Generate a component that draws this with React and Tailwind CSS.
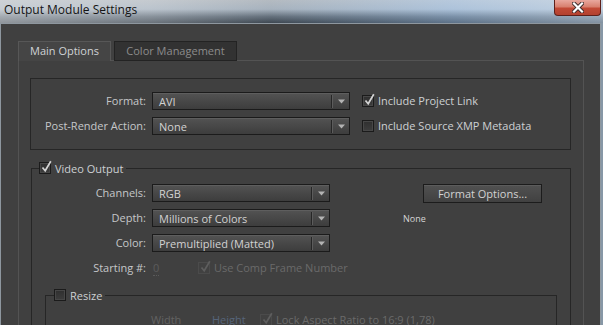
import React from 'react';

function CheckBox({ checked = false, disabled = false }) {
  return (
    <span
      className={`relative block h-[12px] w-[12px] shrink-0 border ${
        disabled
          ? 'border-[#4b4b4b] bg-[#414141]'
          : 'border-[#1b1b1b] bg-linear-to-b from-[#2f2f2f] to-[#3d3d3d] shadow-[inset_0_0_0_1px_#474747]'
      }`}
    >
      {checked && (
        <svg className="absolute left-[1px] top-[-3px]" width="11" height="13" viewBox="0 0 11 13">
          <path
            d="M1.5 7.5 L4.2 10.8 L9.8 1.2"
            fill="none"
            stroke={disabled ? '#5e5e5e' : '#d4d4d4'}
            strokeWidth="1.7"
          />
        </svg>
      )}
    </span>
  );
}

function Select({ value, width }) {
  return (
    <div
      className={`flex h-[18px] ${width} shrink-0 items-center border border-[#1b1b1b] bg-linear-to-b from-[#535353] to-[#3d3d3d] shadow-[inset_0_1px_0_#5e5e5e]`}
    >
      <span className="flex-1 pl-[6px] leading-none text-[#d2d2d2]">{value}</span>
      <span className="h-[13px] w-[2px] border-l border-r border-l-[#262626] border-r-[#5c5c5c]" />
      <span className="flex w-[16px] justify-center">
        <svg width="7" height="5" viewBox="0 0 7 5">
          <path d="M0 0.5H7L3.5 4.5Z" fill="#b3b3b3" />
        </svg>
      </span>
    </div>
  );
}

function GroupHeader({ label, checked, lead }) {
  return (
    <div className="flex h-[12px]">
      <div className={`${lead} mt-[6px] border-l border-t border-[#262626]`} />
      <CheckBox checked={checked} />
      <span className="ml-[4px] self-center leading-none text-[#cdd0d3]">{label}</span>
      <div className="ml-[3px] mt-[6px] flex-1 border-r border-t border-[#262626]" />
    </div>
  );
}

function TitleBar() {
  return (
    <div className="relative flex h-[23px] shrink-0 bg-[linear-gradient(180deg,#c9cfd5_0%,#b9c5d1_40%,#6c7884_72%,#3e4852_100%)]">
      <div className="flex-1 bg-[linear-gradient(90deg,rgba(210,212,214,0.55)_0%,rgba(190,194,198,0.35)_25%,rgba(60,70,80,0.15)_45%,rgba(150,190,235,0.35)_75%,rgba(200,220,240,0.5)_100%)] pl-[4px] pt-[2px]">
        <span className="text-[12px] leading-[16px] text-[#141414]">Output Module Settings</span>
      </div>
      <div className="absolute right-[2px] top-0 flex h-[16px] w-[47px] items-center justify-center rounded-b-[4px] border border-t-0 border-[#5e201a] bg-[linear-gradient(180deg,#e9a89e_0%,#d8806f_45%,#c24a36_55%,#b3412f_100%)]">
        <svg width="12" height="11" viewBox="0 0 12 11">
          <path d="M2 1.5 L10 9.5 M10 1.5 L2 9.5" stroke="#3a2a2a" strokeWidth="4" strokeLinecap="square" />
          <path d="M2 1.5 L10 9.5 M10 1.5 L2 9.5" stroke="#ffffff" strokeWidth="2.2" strokeLinecap="square" />
        </svg>
      </div>
    </div>
  );
}

export default function App() {
  return (
    <div className="flex h-[325px] w-[603px] flex-col overflow-hidden bg-[#8797a6] font-['Open_Sans',sans-serif] text-[11px]">
      <TitleBar />
      {/* Window body */}
      <div className="mr-[2px] flex flex-1 flex-col border-x border-t border-[#8e979f] bg-[#404040] pl-[17px] pt-[17px]">
        {/* Tabs */}
        <div className="flex h-[20px] w-[566px]">
          <div className="flex w-[93px] items-center justify-center border-l border-r border-t border-[#575757] bg-[#454545] text-[#cfd3d6]">
            Main Options
          </div>
          <div className="w-[3px] border-b border-[#535353]" />
          <div className="flex w-[123px] items-center justify-center border border-[#232323] bg-[#323232] text-[#8c8c8c]">
            Color Management
          </div>
          <div className="flex-1 border-b border-[#535353]" />
        </div>

        {/* Panel */}
        <div className="w-[566px] flex-1 border-x border-[#535353]">
          {/* Format group */}
          <div className="ml-[11px] mt-[17px] h-[72px] w-[541px] border border-[#262626] pt-[13px] text-[#c5c7c9]">
            <div className="flex h-[18px] items-center">
              <span className="w-[115px] text-right">Format:</span>
              <div className="ml-[6px]">
                <Select value="AVI" width="w-[198px]" />
              </div>
              <div className="ml-[12px]">
                <CheckBox checked />
              </div>
              <span className="ml-[4px] text-[#cdd0d3]">Include Project Link</span>
            </div>
            <div className="mt-[7px] flex h-[18px] items-center">
              <span className="w-[115px] text-right">Post-Render Action:</span>
              <div className="ml-[6px]">
                <Select value="None" width="w-[198px]" />
              </div>
              <div className="ml-[12px]">
                <CheckBox />
              </div>
              <span className="ml-[4px] text-[#cdd0d3]">Include Source XMP Metadata</span>
            </div>
          </div>

          {/* Video Output group */}
          <div className="ml-[12px] mt-[12px] w-[540px]">
            <GroupHeader label="Video Output" checked lead="w-[8px]" />
            <div className="h-[200px] border-x border-[#262626] pt-[10px] text-[#c5c7c9]">
              <div className="flex">
                <div className="flex w-[298px] shrink-0 flex-col gap-[7px]">
                  <div className="flex h-[18px] items-center">
                    <span className="w-[114px] text-right">Channels:</span>
                    <div className="ml-[6px]">
                      <Select value="RGB" width="w-[178px]" />
                    </div>
                  </div>
                  <div className="flex h-[18px] items-center">
                    <span className="w-[114px] text-right">Depth:</span>
                    <div className="ml-[6px]">
                      <Select value="Millions of Colors" width="w-[178px]" />
                    </div>
                  </div>
                  <div className="flex h-[18px] items-center">
                    <span className="w-[114px] text-right">Color:</span>
                    <div className="ml-[6px]">
                      <Select value="Premultiplied (Matted)" width="w-[178px]" />
                    </div>
                  </div>
                  <div className="flex h-[18px] items-center whitespace-nowrap">
                    <span className="w-[114px] shrink-0 text-right">Starting #:</span>
                    <span className="ml-[6px] w-[46px] shrink-0 pl-[1px]">
                      <span className="border-b border-dotted border-[#5a5a5a] leading-[12px] text-[#5c5c5c]">0</span>
                    </span>
                    <CheckBox checked disabled />
                    <span className="ml-[4px] text-[#6a6a6a]">Use Comp Frame Number</span>
                  </div>
                </div>
                <div className="ml-[73px] flex flex-col">
                  <button className="ml-[20px] h-[19px] w-[119px] border border-[#1c1c1c] bg-linear-to-b from-[#515151] to-[#414141] leading-none text-[#d2d2d2] shadow-[inset_0_1px_0_#5c5c5c]">
                    Format Options...
                  </button>
                  <span className="mt-[10px] text-[9px] leading-[12px] text-[#d6d6d6]">None</span>
                </div>
              </div>

              {/* Resize group */}
              <div className="mx-[13px] mt-[12px]">
                <GroupHeader label="Resize" lead="w-[9px]" />
                <div className="h-[60px] border-x border-[#262626] pt-[13px]">
                  <div className="flex h-[12px] items-center">
                    <span className="ml-[105px] w-[61px] text-[#626262]">Width</span>
                    <span className="w-[48px] text-[#56647a]">Height</span>
                    <CheckBox checked disabled />
                    <span className="ml-[4px] text-[#6a6a6a]">Lock Aspect Ratio to 16:9 (1,78)</span>
                  </div>
                </div>
              </div>
            </div>
          </div>
        </div>
      </div>
    </div>
  );
}
